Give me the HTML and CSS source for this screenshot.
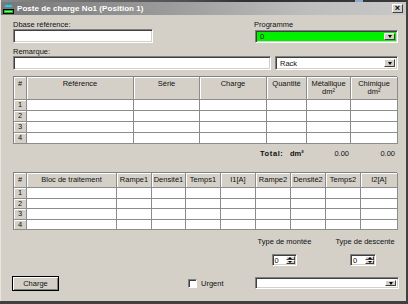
FILE: index.html
```html
<!DOCTYPE html>
<html>
<head>
<meta charset="utf-8">
<link rel="stylesheet" href="styles.css">
</head>
<body>
<div class="win">
  <div class="strip"><span class="bluepatch"></span></div>
  <div class="titlebar">
    <svg class="appicon" width="11" height="12" viewBox="0 0 11 12">
      <rect x="5" y="0" width="1" height="6" fill="#00a0c0"/>
      <rect x="2" y="3" width="7" height="2" fill="#30c8e8"/>
      <rect x="0.5" y="7.5" width="10" height="4" fill="#10c010" stroke="#000"/>
      <rect x="2" y="9" width="7" height="1" fill="#80ff80"/>
    </svg>
    <span class="title">Poste de charge No1 (Position 1)</span>
    <span class="closebtn">×</span>
  </div>
  <div class="content">
    <div class="row2">
      <div class="col-left">
        <div class="lbl">Dbase référence:</div>
        <div class="field w140"></div>
      </div>
      <div class="col-right">
        <div class="lbl">Programme</div>
        <div class="combo green w143"><span class="val">0</span><span class="ddbtn"><i class="tri"></i></span></div>
      </div>
    </div>
    <div class="lbl rem">Remarque:</div>
    <div class="row-rem">
      <div class="field w258"></div>
      <div class="combo w123"><span class="val">Rack</span><span class="ddbtn"><i class="tri"></i></span></div>
    </div>

    <div class="grid g1">
      <div class="h top">#</div><div class="h top">Référence</div><div class="h top">Série</div><div class="h top">Charge</div><div class="h top">Quantité</div><div class="h top">Métallique<br>dm²</div><div class="h top">Chimique<br>dm²</div>
      <div class="n">1</div><div class="c"></div><div class="c"></div><div class="c"></div><div class="c"></div><div class="c"></div><div class="c"></div>
      <div class="n">2</div><div class="c"></div><div class="c"></div><div class="c"></div><div class="c"></div><div class="c"></div><div class="c"></div>
      <div class="n">3</div><div class="c"></div><div class="c"></div><div class="c"></div><div class="c"></div><div class="c"></div><div class="c"></div>
      <div class="n">4</div><div class="c"></div><div class="c"></div><div class="c"></div><div class="c"></div><div class="c"></div><div class="c"></div>
    </div>

    <div class="totalrow">
      <span class="tlabel">Total:</span><span class="tunit">dm²</span><span class="tval v1">0.00</span><span class="tval v2">0.00</span>
    </div>

    <div class="grid g2">
      <div class="h">#</div><div class="h">Bloc de traitement</div><div class="h">Rampe1</div><div class="h">Densité1</div><div class="h">Temps1</div><div class="h">I1[A]</div><div class="h">Rampe2</div><div class="h">Densité2</div><div class="h">Temps2</div><div class="h">I2[A]</div>
      <div class="n">1</div><div class="c"></div><div class="c"></div><div class="c"></div><div class="c"></div><div class="c"></div><div class="c"></div><div class="c"></div><div class="c"></div><div class="c"></div>
      <div class="n">2</div><div class="c"></div><div class="c"></div><div class="c"></div><div class="c"></div><div class="c"></div><div class="c"></div><div class="c"></div><div class="c"></div><div class="c"></div>
      <div class="n">3</div><div class="c"></div><div class="c"></div><div class="c"></div><div class="c"></div><div class="c"></div><div class="c"></div><div class="c"></div><div class="c"></div><div class="c"></div>
      <div class="n">4</div><div class="c"></div><div class="c"></div><div class="c"></div><div class="c"></div><div class="c"></div><div class="c"></div><div class="c"></div><div class="c"></div><div class="c"></div>
    </div>

    <div class="types">
      <div class="tgroup g-mont">
        <div class="lbl">Type de montée</div>
        <div class="spin"><span class="val">0</span><span class="spinbtns"><span class="sb"><i class="tri up"></i></span><span class="sb"><i class="tri"></i></span></span></div>
      </div>
      <div class="tgroup g-desc">
        <div class="lbl">Type de descente</div>
        <div class="spin"><span class="val">0</span><span class="spinbtns"><span class="sb"><i class="tri up"></i></span><span class="sb"><i class="tri"></i></span></span></div>
      </div>
    </div>

    <div class="bottom">
      <div class="btn"><span>Charge</span></div>
      <div class="chk"></div>
      <span class="lbl urgent">Urgent</span>
      <div class="combo w144"><span class="val"></span><span class="ddbtn"><i class="tri"></i></span></div>
    </div>
  </div>
</div>
</body>
</html>
```

FILE: styles.css
```css
* { box-sizing: border-box; }
html, body { margin: 0; padding: 0; }
body {
  width: 408px;
  height: 304px;
  overflow: hidden;
  background: #404040;
  font-family: "Liberation Sans", Arial, sans-serif;
  font-size: 7.5px;
  color: #111;
}
.win {
  width: 406px;
  height: 301px;
  background: #d4d0c8;
  border-left: 1px solid #e8e6e0;
  position: relative;
}
.strip {
  height: 2px;
  background: linear-gradient(to right, #8a8a8a 0%, #505050 45%, #303030 60%, #383838 100%);
  position: relative;
}
.bluepatch {
  position: absolute;
  left: 354px;
  top: 0;
  width: 8px;
  height: 2px;
  background: #8aa8d0;
}
.titlebar {
  height: 13px;
  background: linear-gradient(to right, #787878 0%, #9a9a9a 40%, #bdbdbd 75%, #c8c8c8 100%);
  display: flex;
  align-items: center;
  padding-left: 2px;
  position: relative;
}
.appicon { display: block; margin-right: 3px; margin-top: -1px; }
.title {
  color: #fff;
  font-weight: bold;
  font-size: 8px;
  letter-spacing: 0.05px;
}
.closebtn {
  position: absolute;
  right: 3px;
  top: 2px;
  width: 11px;
  height: 9px;
  background: #d4d0c8;
  border-top: 1px solid #fff;
  border-left: 1px solid #fff;
  border-right: 1px solid #404040;
  border-bottom: 1px solid #404040;
  font-size: 9px;
  font-weight: bold;
  line-height: 6px;
  text-align: center;
  color: #000;
}
.content {
  padding: 5px 0 0 12px;
}
.lbl { line-height: 9px; height: 9px; white-space: nowrap; }
.row2 { display: flex; }
.col-left { width: 241px; }
.col-right .lbl { margin-bottom: 1px; }
.field, .combo, .spin {
  height: 14px;
  background: #fff;
  border-top: 1px solid #808080;
  border-left: 1px solid #808080;
  border-right: 1px solid #fff;
  border-bottom: 1px solid #fff;
  box-shadow: inset 1px 1px 0 #404040, inset -1px -1px 0 #d4d0c8;
  position: relative;
  display: flex;
  align-items: center;
}
.col-right .combo { height: 13px; margin-left: 1px; }
.w140 { width: 140px; }
.w143 { width: 143px; }
.w258 { width: 258px; }
.w123 { width: 123px; }
.w144 { width: 144px; height: 12px; }
.green { background: #00f000; }
.val { padding-left: 4px; line-height: 9px; }
.ddbtn {
  position: absolute;
  right: 2px;
  top: 2px;
  bottom: 2px;
  width: 11px;
  background: #d4d0c8;
  border-top: 1px solid #fff;
  border-left: 1px solid #fff;
  border-right: 1px solid #404040;
  border-bottom: 1px solid #404040;
  display: flex;
  align-items: center;
  justify-content: center;
}
.tri {
  display: block;
  width: 0;
  height: 0;
  border-left: 2.5px solid transparent;
  border-right: 2.5px solid transparent;
  border-top: 3px solid #000;
}
.tri.up { border-top: 0; border-bottom: 3px solid #000; }
.rem { margin-top: 4px; }
.row-rem { display: flex; gap: 4px; }

.grid {
  display: grid;
  width: 384px;
  border-left: 1px solid #808080;
  border-top: 1px solid #808080;
  margin-top: 6px;
}
.g1 {
  grid-template-columns: 13px 107px 66px 67px 40px 44px 47px;
  grid-template-rows: 23px 11px 11px 11px 11px;
}
.g2 {
  margin-top: 14px;
  grid-template-columns: 13px 90px 35px 34px 35px 35px 35px 35px 35px 37px;
  grid-template-rows: 15px 11px 10px 11px 10px;
}
.grid > div {
  border-right: 1px solid #8c8c8c;
  border-bottom: 1px solid #8c8c8c;
}
.h {
  background: #d4d0c8;
  text-align: center;
  display: flex;
  align-items: center;
  justify-content: center;
  line-height: 8px;
  box-shadow: inset 1px 1px 0 #fff;
}
.h.top { align-items: flex-start; padding-top: 3px; }
.n {
  background: #d4d0c8;
  text-align: center;
  line-height: 10px;
  box-shadow: inset 1px 1px 0 #fff;
}
.c { background: #fff; }

.totalrow {
  position: relative;
  height: 9px;
  margin-top: 5px;
  font-weight: bold;
  line-height: 9px;
}
.tlabel { position: absolute; left: 247px; letter-spacing: 0.6px; }
.tunit { position: absolute; left: 277px; }
.tval { position: absolute; font-weight: normal; text-align: right; width: 30px; }
.v1 { left: 306px; }
.v2 { left: 352px; }

.types {
  display: flex;
  margin-top: 7px;
  height: 29px;
}
.tgroup { display: flex; flex-direction: column; align-items: center; }
.g-mont { margin-left: 244px; width: 55px; }
.g-desc { margin-left: 23px; width: 60px; }
.spin {
  width: 25px;
  height: 12px;
  margin-top: 8px;
}
.g-mont .spin { margin-left: -1px; }
.g-desc .spin { width: 26px; margin-left: -4px; }
.spin .val { padding-left: 2px; }
.spinbtns {
  position: absolute;
  right: 1px;
  top: 1px;
  bottom: 1px;
  width: 9px;
  display: flex;
  flex-direction: column;
}
.sb {
  flex: 1;
  background: #d4d0c8;
  border-top: 1px solid #fff;
  border-left: 1px solid #fff;
  border-right: 1px solid #404040;
  border-bottom: 1px solid #404040;
  display: flex;
  align-items: center;
  justify-content: center;
}
.sb .tri { border-left-width: 2px; border-right-width: 2px; border-top-width: 2px; }
.sb .tri.up { border-bottom-width: 2px; border-top-width: 0; }

.bottom {
  display: flex;
  align-items: center;
  margin-top: 9px;
  height: 16px;
}
.btn {
  width: 47px;
  height: 15px;
  border: 1px solid #000;
  background: #d4d0c8;
  box-shadow: inset 1px 1px 0 #fff, inset -1px -1px 0 #808080;
  display: flex;
  align-items: center;
  justify-content: center;
  margin-left: -1px;
}
.chk {
  width: 9px;
  height: 9px;
  margin-left: 129px;
  background: #fff;
  border-top: 1px solid #808080;
  border-left: 1px solid #808080;
  border-right: 1px solid #fff;
  border-bottom: 1px solid #fff;
  box-shadow: inset 1px 1px 0 #404040;
}
.urgent { margin-left: 4px; width: 54px; }
```
